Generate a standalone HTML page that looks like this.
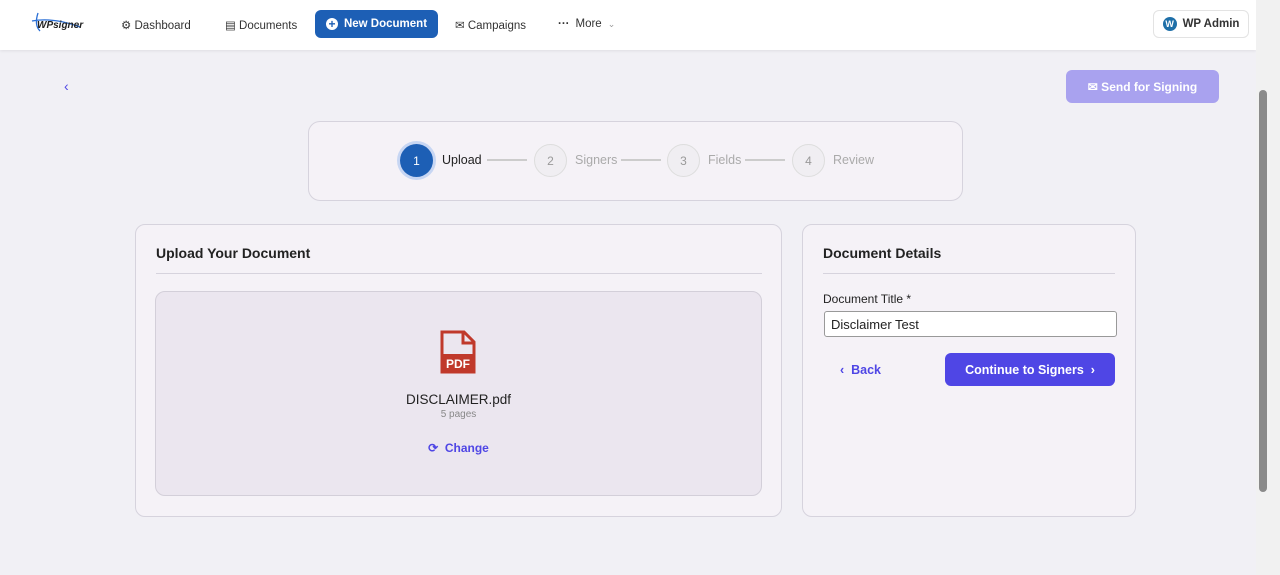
<!DOCTYPE html>
<html><head><style>
*{box-sizing:border-box;margin:0;padding:0}
body{width:1280px;height:575px;overflow:hidden;background:#f1f0f5;font-family:"Liberation Sans",sans-serif;position:relative;color:#222}
.top{position:absolute;left:0;top:0;width:1256px;height:50px;background:#fff;box-shadow:0 1px 3px rgba(0,0,0,.08)}
.nav{position:absolute;top:18px;font-size:11.5px;color:#333;display:flex;align-items:center;gap:6px}
.newdoc{position:absolute;left:315px;top:10px;width:123px;height:28px;background:#1d5fb5;border-radius:6px;color:#fff;font-size:11.5px;font-weight:bold;display:flex;align-items:center;justify-content:center;gap:6px}
.wp{position:absolute;left:1153px;top:10px;width:96px;height:28px;border:1px solid #e3e3e3;border-radius:6px;font-size:11.5px;font-weight:bold;color:#333;display:flex;align-items:center;justify-content:center;gap:6px}
.sb{position:absolute;left:1256px;top:0;width:24px;height:575px;background:#f1f1f1}
.thumb{position:absolute;left:1259px;top:90px;width:8px;height:402px;background:#8a8a8a;border-radius:4px}
.send{position:absolute;left:1066px;top:70px;width:153px;height:33px;background:#a9a2ef;border-radius:6px;color:#fff;font-weight:bold;font-size:12px;display:flex;align-items:center;justify-content:center;gap:8px}
.steps{position:absolute;left:308px;top:121px;width:655px;height:80px;border:1px solid #d6d3dd;border-radius:12px;background:#f5f2f7}
.c{position:absolute;top:144px;width:33px;height:33px;border-radius:50%;border:1px solid #ddd;background:#f0eef2;color:#999;font-size:12px;display:flex;align-items:center;justify-content:center}
.lbl{position:absolute;top:153px;font-size:12.5px;color:#aaa}
.ln{position:absolute;top:159px;height:2px;background:#ccc;width:40px}
.card{position:absolute;top:224px;height:293px;border:1px solid #d6d3dd;border-radius:10px;background:#f5f2f7}
h3{position:absolute;font-size:14px;font-weight:bold;color:#222}
.hr{position:absolute;height:1px;background:#d6d3dd}
</style></head><body>
<div class="top">
<div style="position:absolute;left:28px;top:11px;font-size:10px;font-weight:bold;font-style:italic;color:#222"><svg width="55" height="28" style="position:absolute;left:0;top:0"><path d="M10 2 Q6 14 12 20 M4 10 Q25 6 52 16" stroke="#2a6fd6" fill="none" stroke-width="1.3"/></svg><span style="position:relative;top:9px;left:9px">WPsigner</span></div>
<div class="nav" style="left:121px">&#9881; Dashboard</div>
<div class="nav" style="left:225px">&#9636; Documents</div>
<div class="newdoc"><span style="display:inline-flex;width:12px;height:12px;border-radius:50%;background:#fff;color:#1d5fb5;font-size:12px;line-height:12px;justify-content:center">+</span>New Document</div>
<div class="nav" style="left:455px">&#9993; Campaigns</div>
<div class="nav" style="left:558px"><b>···</b> More <span style="color:#999;font-size:9px">&#8964;</span></div>
<div class="wp"><span style="display:inline-flex;width:14px;height:14px;border-radius:50%;background:#1e6fa8;color:#fff;font-size:9px;align-items:center;justify-content:center">W</span>WP Admin</div>
</div>
<div class="sb"></div><div class="thumb"></div>
<div style="position:absolute;left:64px;top:78px;color:#4f46e5;font-size:14px">&#8249;</div>
<div class="send">&#9993; Send for Signing</div>
<div class="steps"></div>
<div class="c" style="left:400px;background:#1d5fb5;color:#fff;border:none;box-shadow:0 0 0 3px #c7d6f3">1</div>
<div class="lbl" style="left:442px;color:#222">Upload</div>
<div class="ln" style="left:487px"></div>
<div class="c" style="left:534px">2</div><div class="lbl" style="left:575px">Signers</div>
<div class="ln" style="left:621px"></div>
<div class="c" style="left:667px">3</div><div class="lbl" style="left:708px">Fields</div>
<div class="ln" style="left:745px"></div>
<div class="c" style="left:792px">4</div><div class="lbl" style="left:833px">Review</div>

<div class="card" style="left:135px;width:647px"></div>
<h3 style="left:156px;top:245px">Upload Your Document</h3>
<div class="hr" style="left:156px;top:273px;width:606px"></div>
<div style="position:absolute;left:155px;top:291px;width:607px;height:205px;border:1px solid #d3cfd9;border-radius:10px;background:#ebe6ef"></div>
<svg style="position:absolute;left:440px;top:330px" width="36" height="44" viewBox="0 0 36 44"><path d="M2 2H24L34 12V42H2Z" fill="none" stroke="#c0392b" stroke-width="3"/><path d="M23 2V13H34" fill="none" stroke="#c0392b" stroke-width="3"/><rect x="1" y="24" width="34" height="18" fill="#c0392b"/><text x="18" y="38" font-size="12" font-weight="bold" fill="#fff" text-anchor="middle" font-family="Liberation Sans">PDF</text></svg>
<div style="position:absolute;left:155px;width:607px;top:392px;text-align:center;font-size:13.5px;color:#222">DISCLAIMER.pdf</div>
<div style="position:absolute;left:155px;width:607px;top:409px;text-align:center;font-size:10px;color:#888">5 pages</div>
<div style="position:absolute;left:155px;width:607px;top:441px;text-align:center;font-size:12px;font-weight:bold;color:#4f46e5">&#10227; &nbsp;Change</div>

<div class="card" style="left:802px;width:334px"></div>
<h3 style="left:823px;top:245px">Document Details</h3>
<div class="hr" style="left:823px;top:273px;width:292px"></div>
<div style="position:absolute;left:823px;top:292px;font-size:12px;color:#222">Document Title *</div>
<div style="position:absolute;left:824px;top:311px;width:293px;height:26px;border:1px solid #999;border-radius:3px;background:#fff;font-size:13px;padding:5px 6px">Disclaimer Test</div>
<div style="position:absolute;left:840px;top:363px;font-size:12.5px;font-weight:bold;color:#4f46e5">&#8249; &nbsp;Back</div>
<div style="position:absolute;left:945px;top:353px;width:170px;height:33px;background:#4f46e5;border-radius:6px;color:#fff;font-size:12.5px;font-weight:bold;display:flex;align-items:center;justify-content:center">Continue to Signers &nbsp;&#8250;</div>
</body></html>
